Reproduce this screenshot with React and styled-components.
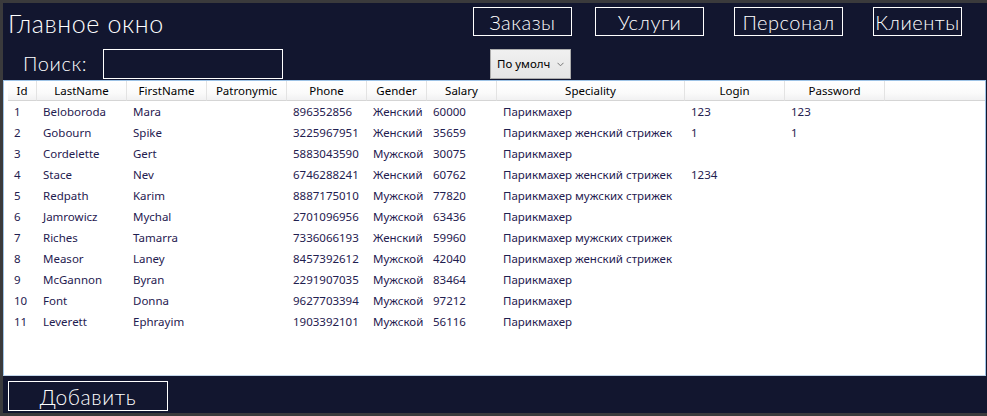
import React from "react";
import styled, { createGlobalStyle } from "styled-components";

const Global = createGlobalStyle`
  html, body { margin: 0; padding: 0; background: #3a3a3c; }
  body { width: 987px; height: 416px; overflow: hidden; }
`;

const Frame = styled.div`
  width: 987px;
  height: 416px;
  box-sizing: border-box;
  padding: 3px 0 3px 3px;
  background: #3a3a3c;
  display: flex;
`;

const Window = styled.div`
  flex: 1;
  background: #12162f;
  display: flex;
  flex-direction: column;
  font-family: "Lato", "DejaVu Sans", sans-serif;
  font-weight: 300;
  color: #fff;
`;

const TopBar = styled.div`
  display: flex;
  align-items: flex-start;
  height: 44px;
  padding: 4px 0 0 5px;
  box-sizing: border-box;
`;

const Title = styled.h1`
  flex: 1;
  margin: 0;
  font-weight: 300;
  font-size: 25px;
  line-height: 32px;
  letter-spacing: 0.6px;
  color: #fff;
`;

const NavButton = styled.button`
  width: ${(p) => p.$w}px;
  margin-left: ${(p) => p.$ml}px;
  height: 29px;
  box-sizing: border-box;
  border: 1px solid #fff;
  background: transparent;
  color: #fff;
  font-family: "Lato", "DejaVu Sans", sans-serif;
  font-weight: 300;
  font-size: 20px;
  letter-spacing: 0.5px;
  padding: 0;
  line-height: 26px;
`;

const NavGroup = styled.div`
  display: flex;
  padding-right: 25px;
`;

const SearchRow = styled.div`
  display: flex;
  align-items: center;
  height: 33px;
  padding-left: 20px;
`;

const SearchLabel = styled.span`
  font-size: 20px;
  letter-spacing: 0.6px;
  width: 80px;
  line-height: 29px;
`;

const SearchBox = styled.input`
  width: 180px;
  height: 30px;
  box-sizing: border-box;
  border: 1px solid #fff;
  background: transparent;
  color: #fff;
  outline: none;
  margin-right: 207px;
`;

const Combo = styled.div`
  width: 81px;
  height: 30px;
  box-sizing: border-box;
  border: 1px solid #acacac;
  background: linear-gradient(#f0f0f0, #e5e5e5);
  display: flex;
  align-items: center;
  justify-content: space-between;
  padding: 0 6px 0 6px;
  font-family: "Noto Sans", sans-serif;
  font-weight: 400;
  font-size: 11.5px;
  color: #000;
`;

const Chevron = styled.svg`
  width: 7px;
  height: 5px;
  margin-top: 2px;
`;

const GridBox = styled.div`
  height: 296px;
  box-sizing: border-box;
  margin-right: 1px;
  background: #fff;
  border: 1px solid #9ec3e6;
  border-bottom-color: #c3d6ea;
  font-family: "Noto Sans", "Open Sans", sans-serif;
  font-weight: 400;
  font-size: 11.5px;
  overflow: hidden;
`;

const Table = styled.div`
  display: grid;
  grid-template-columns: 4px 29px 90px 80px 80px 80px 60px 70px 188px 100px 100px 1fr;
`;

const HeaderCell = styled.div`
  height: 20px;
  box-sizing: border-box;
  background: linear-gradient(#ffffff 0%, #fbfbfb 60%, #f1f1f2 100%);
  border-bottom: 1px solid #d5d5d5;
  border-right: ${(p) => (p.$last ? "none" : "1px solid #e3e3e3")};
  color: #000;
  text-align: center;
  line-height: 19px;
  white-space: nowrap;
  overflow: hidden;
`;

const Corner = styled.div`
  height: 20px;
  background: #fff;
`;

const Cell = styled.div`
  height: 21px;
  line-height: 21px;
  padding: 0 8px 0 6px;
  color: #1f2050;
  white-space: nowrap;
  overflow: hidden;
`;

const RowStub = styled.div`
  height: 21px;
`;

const Footer = styled.div`
  flex: 1;
  display: flex;
  align-items: flex-start;
  padding: 5px 0 0 5px;
`;

const AddButton = styled.button`
  width: 160px;
  height: 30px;
  box-sizing: border-box;
  border: 1px solid #fff;
  background: transparent;
  color: #fff;
  font-family: "Lato", "DejaVu Sans", sans-serif;
  font-weight: 300;
  font-size: 21px;
  letter-spacing: 0.6px;
  padding: 0;
  line-height: 27px;
`;

const columns = [
  "Id",
  "LastName",
  "FirstName",
  "Patronymic",
  "Phone",
  "Gender",
  "Salary",
  "Speciality",
  "Login",
  "Password",
];

const rows = [
  ["1", "Beloboroda", "Mara", "", "896352856", "Женский", "60000", "Парикмахер", "123", "123"],
  ["2", "Gobourn", "Spike", "", "3225967951", "Женский", "35659", "Парикмахер женский стрижек", "1", "1"],
  ["3", "Cordelette", "Gert", "", "5883043590", "Мужской", "30075", "Парикмахер", "", ""],
  ["4", "Stace", "Nev", "", "6746288241", "Женский", "60762", "Парикмахер женский стрижек", "1234", ""],
  ["5", "Redpath", "Karim", "", "8887175010", "Мужской", "77820", "Парикмахер мужских стрижек", "", ""],
  ["6", "Jamrowicz", "Mychal", "", "2701096956", "Мужской", "63436", "Парикмахер", "", ""],
  ["7", "Riches", "Tamarra", "", "7336066193", "Женский", "59960", "Парикмахер мужских стрижек", "", ""],
  ["8", "Measor", "Laney", "", "8457392612", "Мужской", "42040", "Парикмахер женский стрижек", "", ""],
  ["9", "McGannon", "Byran", "", "2291907035", "Мужской", "83464", "Парикмахер", "", ""],
  ["10", "Font", "Donna", "", "9627703394", "Мужской", "97212", "Парикмахер", "", ""],
  ["11", "Leverett", "Ephrayim", "", "1903392101", "Мужской", "56116", "Парикмахер", "", ""],
];

export default function App() {
  return (
    <>
      <Global />
      <Frame>
        <Window>
          <TopBar>
            <Title>Главное окно</Title>
            <NavGroup>
              <NavButton $w={99} $ml={0}>Заказы</NavButton>
              <NavButton $w={109} $ml={23}>Услуги</NavButton>
              <NavButton $w={109} $ml={30}>Персонал</NavButton>
              <NavButton $w={89} $ml={30}>Клиенты</NavButton>
            </NavGroup>
          </TopBar>
          <SearchRow>
            <SearchLabel>Поиск:</SearchLabel>
            <SearchBox />
            <Combo>
              <span>По умолч</span>
              <Chevron viewBox="0 0 7 5">
                <path d="M0.5 0.8 L3.5 3.8 L6.5 0.8" fill="none" stroke="#777" strokeWidth="1" />
              </Chevron>
            </Combo>
          </SearchRow>
          <GridBox>
            <Table>
              <Corner />
              {columns.map((c) => (
                <HeaderCell key={c}>{c}</HeaderCell>
              ))}
              <HeaderCell $last />
              {rows.map((r) => (
                <React.Fragment key={r[0]}>
                  <RowStub />
                  {r.map((v, i) => (
                    <Cell key={i}>{v}</Cell>
                  ))}
                  <RowStub />
                </React.Fragment>
              ))}
            </Table>
          </GridBox>
          <Footer>
            <AddButton>Добавить</AddButton>
          </Footer>
        </Window>
      </Frame>
    </>
  );
}
